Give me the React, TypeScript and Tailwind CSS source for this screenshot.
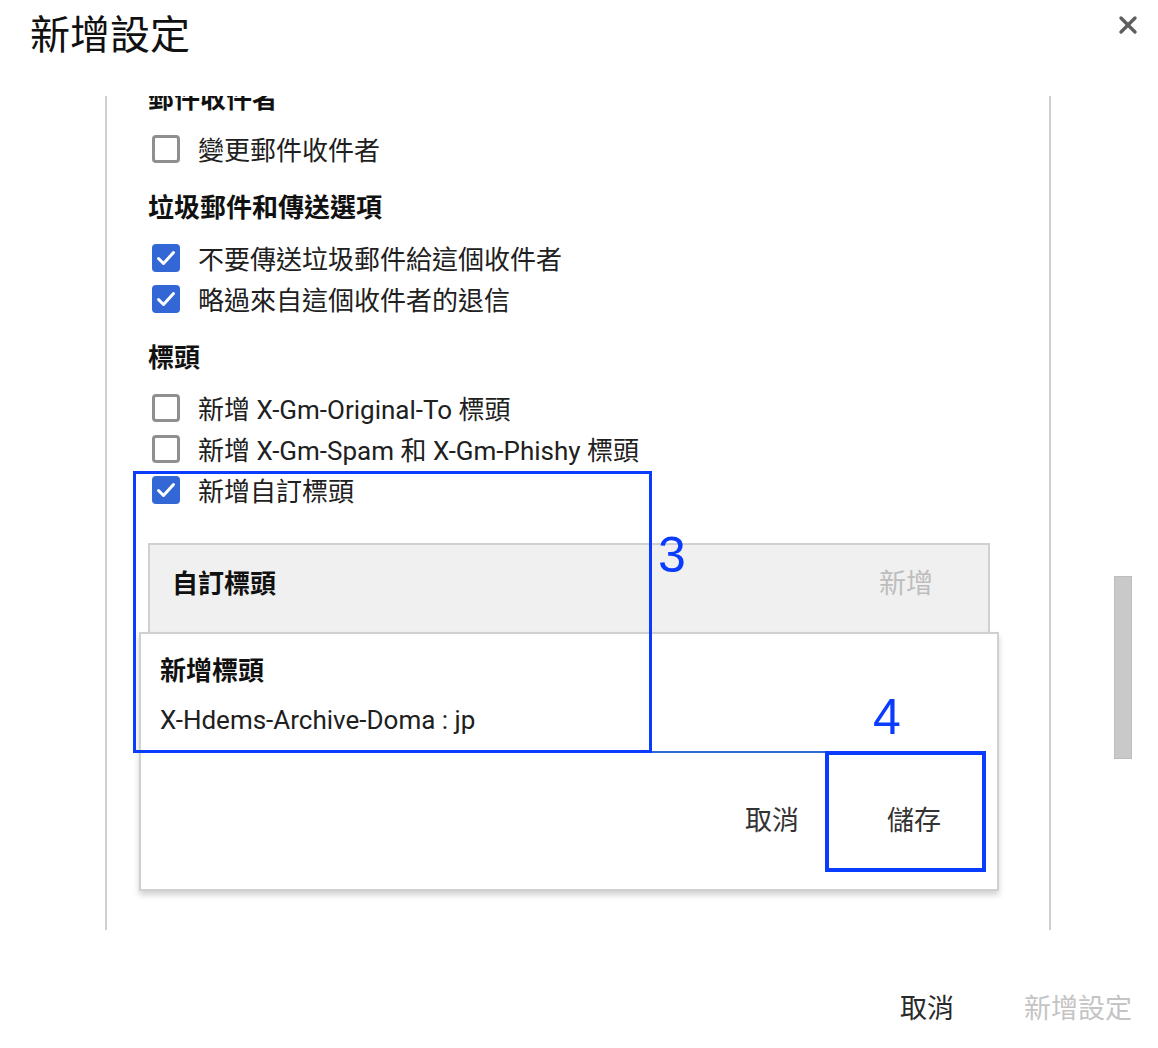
import { ReactNode } from "react";

const FONT = "font-['Roboto','Noto_Sans_CJK_TC',sans-serif]";

const Checkbox = ({ checked }: { checked: boolean }) =>
  checked ? (
    <span className="flex h-[28px] w-[28px] shrink-0 items-center justify-center rounded-[4px] bg-[#3367d6]">
      <svg viewBox="0 0 28 28" className="h-[28px] w-[28px]" fill="none">
        <path d="M6.5 14.5l5 5 10-11" stroke="white" strokeWidth="3" strokeLinecap="round" strokeLinejoin="round" />
      </svg>
    </span>
  ) : (
    <span className="h-[28px] w-[28px] shrink-0 rounded-[4px] border-[3px] border-[#8f8f8f] bg-white" />
  );

const Row = ({ checked, children }: { checked: boolean; children: ReactNode }) => (
  <div className="flex h-[41px] items-center pl-[4px]">
    <Checkbox checked={checked} />
    <span className="ml-[18px] mt-[4px] text-[26px] leading-none text-[#202020]">{children}</span>
  </div>
);

const Heading = ({ children, first }: { children: ReactNode; first?: boolean }) => (
  <div
    className={`flex h-[36px] items-center text-[26px] font-bold leading-none text-[#111] ${
      first ? "-mt-[15px]" : "mt-[21px]"
    } mb-[11px]`}
  >
    {children}
  </div>
);

export default function App() {
  return (
    <div className={`relative h-[1048px] w-[1158px] overflow-hidden bg-white ${FONT}`}>
      {/* header */}
      <div className="flex h-[96px] items-start justify-between pl-[30px] pr-[18px] pt-[12px]">
        <h1 className="h-[48px] text-[40px] font-normal leading-[48px] text-[#111]">新增設定</h1>
        <button className="mt-[1px] flex h-[24px] w-[24px] items-center justify-center">
          <svg viewBox="0 0 20 20" className="h-[20px] w-[20px]">
            <path d="M3 3l14 14M17 3L3 17" stroke="#5f5f5f" strokeWidth="3.4" strokeLinecap="round" />
          </svg>
        </button>
      </div>

      {/* body */}
      <div className="flex">
        <div className="relative ml-[105px] h-[834px] w-[946px] border-x-2 border-l-[#d0d0d0] border-r-[#cfcfcf]">
          <div className="h-full overflow-hidden pl-[41px]">
            <Heading first>郵件收件者</Heading>
            <Row checked={false}>變更郵件收件者</Row>

            <Heading>垃圾郵件和傳送選項</Heading>
            <Row checked>不要傳送垃圾郵件給這個收件者</Row>
            <Row checked>略過來自這個收件者的退信</Row>

            <Heading>標頭</Heading>
            <Row checked={false}>新增 X-Gm-Original-To 標頭</Row>
            <Row checked={false}>新增 X-Gm-Spam 和 X-Gm-Phishy 標頭</Row>
            <Row checked>新增自訂標頭</Row>

            <div className="mt-[33px] flex h-[140px] w-[842px] items-start justify-between border-2 border-[#d0d0d0] bg-[#f0f0f0] pl-[22px] pr-[55px] pt-[24px]">
              <span className="text-[26px] font-bold leading-[30px] text-[#111]">自訂標頭</span>
              <span className="text-[27px] leading-[30px] text-[#bdbdbd]">新增</span>
            </div>
          </div>

          {/* add header popup */}
          <div className="absolute left-[32px] top-[536px] h-[259px] w-[860px] border-2 border-[#d0d0d0] bg-white shadow-[0_4px_6px_rgba(0,0,0,0.18)]">
            <div className="px-[19px] pt-[22px]">
              <div className="h-[30px] text-[26px] font-bold leading-[30px] text-[#111]">新增標頭</div>
              <div className="mt-[19px] h-[30px] text-[26px] leading-[30px] text-[#202020]">
                X-Hdems-Archive-Doma : jp
              </div>
              <div className="mt-[16px] h-[2px] w-[818px] bg-[#2f66d8]" />
            </div>
            <div className="mt-[53px] flex justify-end gap-[88px] pr-[56px]">
              <span className="text-[27px] leading-[30px] text-[#333]">取消</span>
              <span className="text-[27px] leading-[30px] text-[#333]">儲存</span>
            </div>
          </div>
        </div>

        <div className="ml-[63px] mt-[480px] h-[183px] w-[18px] border border-[#bdbdbd] bg-[#c9c9c9]" />
      </div>

      {/* footer */}
      <div className="mt-[62px] flex justify-end gap-[70px] pr-[26px]">
        <span className="text-[27px] leading-[34px] text-[#2a2a2a]">取消</span>
        <span className="text-[27px] leading-[34px] text-[#c4c4c4]">新增設定</span>
      </div>

      {/* annotations */}
      <div className="pointer-events-none absolute left-[133px] top-[471px] h-[282px] w-[519px] border-[3px] border-[#0a3cff]" />
      <span className="pointer-events-none absolute left-[658px] top-[527px] font-['Liberation_Sans',sans-serif] text-[50px] leading-[56px] text-[#0a3cff]">
        3
      </span>
      <div className="pointer-events-none absolute left-[825px] top-[751px] h-[121px] w-[161px] border-[4px] border-[#0a3cff]" />
      <span className="pointer-events-none absolute left-[873px] top-[689px] font-['Liberation_Sans',sans-serif] text-[50px] leading-[56px] text-[#0a3cff]">
        4
      </span>
    </div>
  );
}
